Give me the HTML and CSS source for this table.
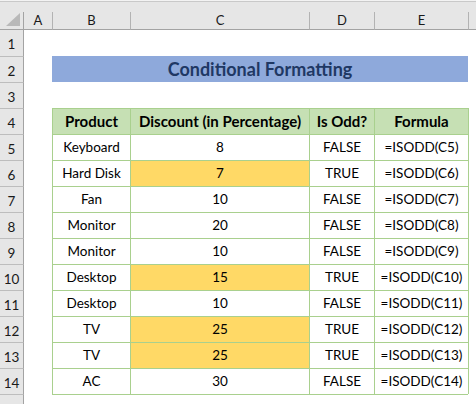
FILE: index.html
```html
<!DOCTYPE html>
<html>
<head>
<meta charset="utf-8">
<link rel="stylesheet" href="styles.css">
</head>
<body>
<div class="sheet">
  <div class="strip"></div>

  <div class="ch corner"><svg class="tri" width="14" height="13" viewBox="0 0 14 13"><polygon points="0,13 14,13 14,0" fill="#b9b9b9"/></svg></div>
  <div class="ch">A</div>
  <div class="ch sep">B</div>
  <div class="ch sep">C</div>
  <div class="ch sep">D</div>
  <div class="ch sep">E</div>
  <div class="ch sep"></div>

  <div class="rn first">1</div><div class="c wide"></div>

  <div class="rn">2</div><div class="c"></div><div class="title">Conditional Formatting</div><div class="c"></div>

  <div class="rn">3</div><div class="c wide"></div>

  <div class="rn">4</div><div class="c"></div>
  <div class="c bt bl hd">Product</div><div class="c bt bl hd">Discount (in Percentage)</div><div class="c bt bl hd">Is Odd?</div><div class="c bt bl hd">Formula</div><div class="c bl"></div>

  <div class="rn">5</div><div class="c"></div>
  <div class="c bt bl">Keyboard</div><div class="c bt bl">8</div><div class="c bt bl">FALSE</div><div class="c bt bl">=ISODD(C5)</div><div class="c bl"></div>

  <div class="rn">6</div><div class="c"></div>
  <div class="c bt bl">Hard Disk</div><div class="c bt bl y">7</div><div class="c bt bl">TRUE</div><div class="c bt bl">=ISODD(C6)</div><div class="c bl"></div>

  <div class="rn">7</div><div class="c"></div>
  <div class="c bt bl">Fan</div><div class="c bt bl">10</div><div class="c bt bl">FALSE</div><div class="c bt bl">=ISODD(C7)</div><div class="c bl"></div>

  <div class="rn">8</div><div class="c"></div>
  <div class="c bt bl">Monitor</div><div class="c bt bl">20</div><div class="c bt bl">FALSE</div><div class="c bt bl">=ISODD(C8)</div><div class="c bl"></div>

  <div class="rn">9</div><div class="c"></div>
  <div class="c bt bl">Monitor</div><div class="c bt bl">10</div><div class="c bt bl">FALSE</div><div class="c bt bl">=ISODD(C9)</div><div class="c bl"></div>

  <div class="rn">10</div><div class="c"></div>
  <div class="c bt bl">Desktop</div><div class="c bt bl y">15</div><div class="c bt bl">TRUE</div><div class="c bt bl">=ISODD(C10)</div><div class="c bl"></div>

  <div class="rn">11</div><div class="c"></div>
  <div class="c bt bl">Desktop</div><div class="c bt bl">10</div><div class="c bt bl">FALSE</div><div class="c bt bl">=ISODD(C11)</div><div class="c bl"></div>

  <div class="rn">12</div><div class="c"></div>
  <div class="c bt bl">TV</div><div class="c bt bl y">25</div><div class="c bt bl">TRUE</div><div class="c bt bl">=ISODD(C12)</div><div class="c bl"></div>

  <div class="rn">13</div><div class="c"></div>
  <div class="c bt bl">TV</div><div class="c bt bl y">25</div><div class="c bt bl">TRUE</div><div class="c bt bl">=ISODD(C13)</div><div class="c bl"></div>

  <div class="rn">14</div><div class="c"></div>
  <div class="c bt bl">AC</div><div class="c bt bl">30</div><div class="c bt bl">FALSE</div><div class="c bt bl">=ISODD(C14)</div><div class="c bl"></div>

  <div class="rn"></div><div class="c"></div>
  <div class="c bt"></div><div class="c bt"></div><div class="c bt"></div><div class="c bt"></div><div class="c"></div>
</div>
</body>
</html>
```

FILE: styles.css
```css
* { box-sizing: border-box; }
html, body {
  margin: 0;
  padding: 0;
  background: #ffffff;
  overflow: hidden;
}
body {
  font-family: Lato, "Liberation Sans", sans-serif;
  color: #000;
}
.sheet {
  display: grid;
  grid-template-columns: 24px 28px 78px 179px 65px 94px 1fr;
  grid-template-rows: 12px 18px repeat(15, 26px);
  width: 476px;
  height: 404px;
  overflow: hidden;
}
.strip {
  grid-column: 1 / -1;
  background: #e6e6e6;
  border-top: 1px solid #f3f3f3;
  box-shadow: inset 0 1px 0 #c9c9c9;
}
.ch {
  background: #e6e6e6;
  border-bottom: 1px solid #a3a3a3;
  text-align: center;
  font-size: 13px;
  line-height: 16px;
  color: #1a1a1a;
}
.ch.sep {
  border-left: 1px solid #b3b3b3;
}
.corner {
  border-right: 1px solid #a3a3a3;
  display: flex;
  align-items: flex-end;
  justify-content: flex-end;
  padding: 0 3px 3px 0;
}
.tri { display: block; }
.rn {
  background: #e6e6e6;
  border-right: 1px solid #a3a3a3;
  border-top: 1px solid #bdbdbd;
  text-align: center;
  font-size: 13.5px;
  line-height: 21px;
  padding-top: 4px;
  color: #1a1a1a;
}
.rn.first { border-top: none; }
.c {
  font-size: 13.5px;
  line-height: 25px;
  text-align: center;
  white-space: nowrap;
  overflow: hidden;
}
.wide { grid-column: span 6; }
.bt { border-top: 1px solid #a9d08e; }
.bl { border-left: 1px solid #a9d08e; }
.hd {
  background: #c6e0b4;
  font-weight: bold;
  font-size: 15px;
}
.y { background: #ffd966; }
.title {
  grid-column: span 4;
  background: #8ea9db;
  color: #1f3864;
  font-weight: bold;
  font-size: 18px;
  line-height: 26px;
  text-align: center;
  white-space: nowrap;
}
```
